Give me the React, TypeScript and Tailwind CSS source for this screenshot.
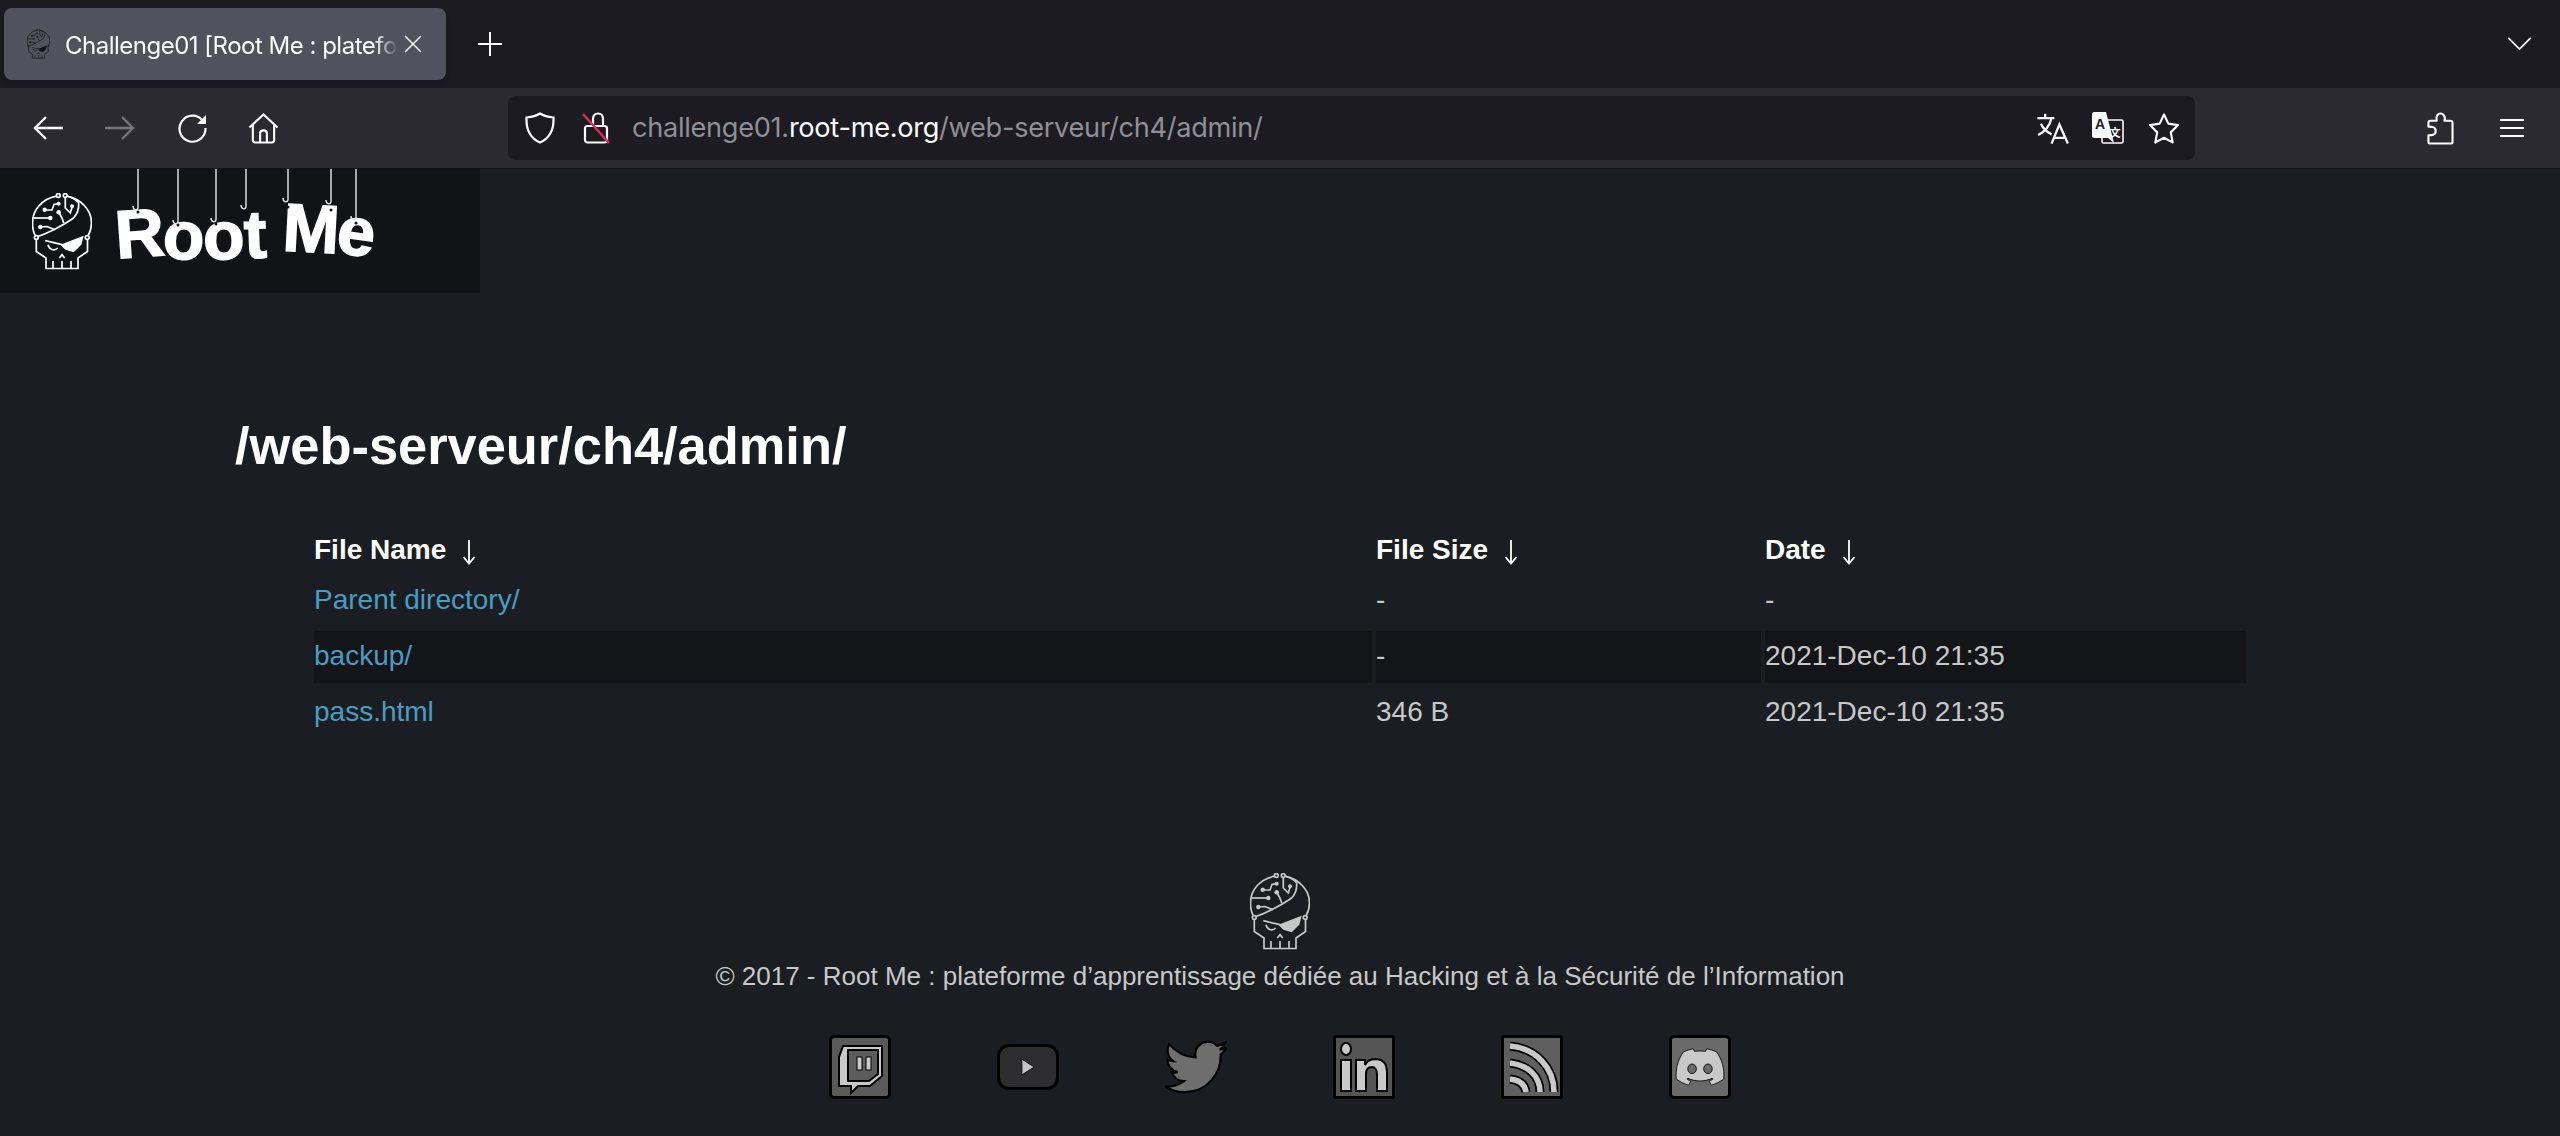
import { FaDiscord, FaTwitter } from "react-icons/fa";

const Skull = ({ className, color }: { className: string; color: string }) => (
  <svg viewBox="0 0 60 77" className={className} fill="none" stroke={color} strokeWidth="1.700">
    <circle cx="26.3" cy="2.5" r="1.9" />
    <circle cx="33.2" cy="2.5" r="1.9" />
    <circle cx="4.3" cy="44.5" r="1.9" />
    <circle cx="55.2" cy="44.5" r="1.9" />
    <path d="M24.5 3.2C10 6 0.5 17 0.5 30c0 5 1.2 10 3 13" />
    <path d="M35 3.2C49 6 59.5 17 59.5 30c0 5-1.5 9.500-3.500 13" />
    <path d="M5.500 43.500C14 41 32 32 41.500 25c4-4 5.500-9 5.200-15 -3-4-8-6-12-7" />
    <path d="M4.300 46.400V58.500L14 65V75.500H46V65L55.500 58.500V46.400" />
    <path d="M21 75V68M30 75V68M39 75V68" />
    <path d="M33.300 4V15l5 5 2-6.500" />
    <path d="M13 17H20L22 11.500 26.700 10.700" />
    <circle cx="12.700" cy="16.700" r="2.200" fill={color} stroke="none" />
    <circle cx="26.700" cy="10.700" r="2" fill={color} stroke="none" />
    <circle cx="26.700" cy="19.300" r="2.300" fill={color} stroke="none" />
    <path d="M26.700 19.300L30 25l1.700 5" />
    <path d="M1.500 25H18.300" />
    <circle cx="18.300" cy="25" r="2.200" fill={color} stroke="none" />
    <path d="M8.300 34L15 33.500 23 36.700" />
    <circle cx="8.300" cy="34" r="2.200" fill={color} stroke="none" />
    <circle cx="40" cy="13.300" r="2" fill={color} stroke="none" />
    <path d="M13.300 47.700L30 51.700" />
    <path fill={color} stroke="none" d="M28.300 51.700L51.700 42.700 49.300 51.700 41.700 59.300 33.300 56.700Z" />
    <path d="M16 51.700c1 4.500 6 7 9.700 3.300" />
    <path d="M27.300 65L30 61.700 32.700 65" />
  </svg>
);

const IconBox = ({ children, bg }: { children: React.ReactNode; bg: string }) => (
  <div className={`w-[62px] h-[64px] rounded-[5px] border-[3px] border-black flex items-center justify-center ${bg}`}>
    {children}
  </div>
);

const TwitchIcon = () => (
  <div className="w-[62px] h-[64px] rounded-[5px] border-[3px] border-black bg-[#5a5a5a] flex items-center justify-center">
    <svg viewBox="0 0 56 58" className="w-[56px] h-[58px]">
      <path d="M11 8H50V38L38 48H26L19 55V48H7V19Z" fill="#c9c9c9" stroke="#000" strokeWidth="2" />
      <path d="M16 12H46V36L37 43H16Z" fill="#5c5c5c" stroke="#000" strokeWidth="2" />
      <rect x="25" y="19" width="5" height="13" fill="#c9c9c9" stroke="#000" strokeWidth="1" />
      <rect x="34" y="19" width="5" height="13" fill="#c9c9c9" stroke="#000" strokeWidth="1" />
    </svg>
  </div>
);

const YoutubeIcon = () => (
  <div className="w-[62px] h-[46px] rounded-[12px] border-[3px] border-black bg-[#2e2e30] flex items-center justify-center">
    <svg viewBox="0 0 16 20" className="w-[14px] h-[20px]">
      <path d="M1 1L15 10L1 19Z" fill="#c4c4c4" stroke="#000" strokeWidth="1" />
    </svg>
  </div>
);

const LinkedinIcon = () => (
  <div className="w-[62px] h-[64px] rounded-[3px] border-[3px] border-black bg-[#555] flex items-center justify-center">
    <svg viewBox="0 0 56 58" className="w-[56px] h-[58px]">
      <g fill="#c9c9c9" stroke="#000" strokeWidth="2">
        <ellipse cx="10" cy="11" rx="5" ry="6" />
        <rect x="5" y="22" width="10" height="31" />
        <path d="M20 22H29V27C32 21 37 21 41 21 48 22 51 27 51 34V53H41V36C41 32 39 29 36 29 32 29 30 32 30 36V53H20Z" />
      </g>
    </svg>
  </div>
);

const RssIcon = () => (
  <div className="w-[62px] h-[64px] rounded-[3px] border-[3px] border-black bg-[#5f5f5f] flex items-center justify-center">
    <svg viewBox="0 0 56 58" className="w-[56px] h-[58px]" fill="none">
      <g stroke="#000" strokeWidth="9">
        <path d="M6 8C32 10 50 30 50 54" />
        <path d="M6 25C24 27 36 38 36 54" />
        <path d="M6 41C15 42 21 46 22 54" />
      </g>
      <g stroke="#c9c9c9" strokeWidth="5.500">
        <path d="M6 8C32 10 50 30 50 54" />
        <path d="M6 25C24 27 36 38 36 54" />
        <path d="M6 41C15 42 21 46 22 54" />
      </g>
    </svg>
  </div>
);

const DiscordIcon = () => (
  <IconBox bg="bg-[#6a6a6a]">
    <FaDiscord className="w-[52px] h-[52px] text-[#c9c9c9] [&_path]:stroke-black [&_path]:[stroke-width:10px]" />
  </IconBox>
);

const ArrowDown = () => (
  <svg viewBox="0 0 14 26" className="w-[14px] h-[26px] ml-[16px] inline-block align-middle" fill="none" stroke="#fff" strokeWidth="1.800">
    <path d="M7 1V24M1.500 18L7 24.500 12.500 18" />
  </svg>
);

// hanging strings of the logo: x, end of the string, hole in the letter
const strings = [
  [138, 39, 43],
  [178, 53, 56],
  [216, 51, 55],
  [246, 38, 43],
  [288, 31, 38],
  [331, 33, 41],
  [356, 49, 54],
];

const letters = [
  { ch: "R", cls: "rotate-[-4deg] translate-y-[-1px]" },
  { ch: "o", cls: "rotate-[2deg] translate-y-[1px]" },
  { ch: "o", cls: "rotate-[-2deg] translate-y-[1px]" },
  { ch: "t", cls: "rotate-[-2deg] translate-y-[0px] ml-[1px]" },
  { ch: "M", cls: "rotate-[3deg] translate-y-[-6px] ml-[18px]" },
  { ch: "e", cls: "rotate-[8deg] translate-y-[-3px]" },
];

const rows = [
  { name: "Parent directory/", size: "-", date: "-", cellBg: "" },
  { name: "backup/", size: "-", date: "2021-Dec-10 21:35", cellBg: "bg-[#131519]" },
  { name: "pass.html", size: "346 B", date: "2021-Dec-10 21:35", cellBg: "" },
];

const App = () => {
  return (
    <div className="w-[2560px] h-[1136px] overflow-hidden flex flex-col bg-[#1a1e23] font-['Liberation_Sans',sans-serif]">
      {/* tab strip */}
      <div className="h-[88px] shrink-0 bg-[#1c1b22] flex items-center pl-[4px] pr-[28px]">
        <div className="w-[442px] h-[72px] rounded-[8px] bg-[#52525e] flex items-center pl-[23px] pr-[24px] shadow-md">
          <Skull className="w-[23px] h-[30px] shrink-0" color="#111" />
          <span className="ml-[15px] mt-[3px] w-[333px] overflow-hidden whitespace-nowrap text-[24px] text-[#fbfbfe] font-['Inter',sans-serif] tracking-[-0.5px] [mask-image:linear-gradient(to_right,black_93%,transparent)]">
            Challenge01 [Root Me : plateforme
          </span>
          <svg viewBox="0 0 18 18" className="w-[18px] h-[18px] ml-[6px] -mt-[1px] shrink-0" fill="none" stroke="#fbfbfe" strokeWidth="1.500">
            <path d="M1 1L17 17M17 1L1 17" />
          </svg>
        </div>
        <svg viewBox="0 0 26 26" className="w-[26px] h-[26px] ml-[31px]" fill="none" stroke="#fbfbfe" strokeWidth="2">
          <path d="M13 1V25M1 13H25" />
        </svg>
        <svg viewBox="0 0 26 15" className="w-[25px] h-[14px] ml-auto -mt-[1px]" fill="none" stroke="#fbfbfe" strokeWidth="1.800">
          <path d="M1 1L13 13 25 1" />
        </svg>
      </div>

      {/* nav bar */}
      <div className="h-[81px] shrink-0 bg-[#2b2a33] border-b border-[#111] flex items-center pl-[33px] pr-[36px]">
        <svg viewBox="0 0 30 24" className="w-[30px] h-[24px]" fill="none" stroke="#fbfbfe" strokeWidth="2.400">
          <path d="M30 12H2M13 1L2 12 13 23" />
        </svg>
        <svg viewBox="0 0 30 24" className="w-[30px] h-[24px] ml-[42px]" fill="none" stroke="#77767c" strokeWidth="2.400">
          <path d="M0 12H28M17 1L28 12 17 23" />
        </svg>
        <svg viewBox="0 0 30 30" className="w-[30px] h-[30px] ml-[42px]" fill="none" stroke="#fbfbfe" strokeWidth="2.200">
          <path d="M26 8A13 13 0 1 0 28.500 15" />
          <path d="M29 2V11H20Z" fill="#fbfbfe" stroke="none" />
        </svg>
        <svg viewBox="0 0 32 32" className="w-[31px] h-[31px] ml-[41px]" fill="none" stroke="#fbfbfe" strokeWidth="2.200">
          <path d="M1.500 15L16 1.500 30.500 15M5 12V28C5 29.500 6 30.500 7.500 30.500H24.500C26 30.500 27 29.500 27 28V12" />
          <path d="M12.500 30V21C12.500 19 14 18 16 18S19.500 19 19.500 21V30" />
        </svg>
        <div className="w-[1688px] h-[64px] ml-[229px] rounded-[8px] bg-[#1c1b22] flex items-center pl-[17px] pr-[15px]">
          <svg viewBox="0 0 30 32" className="w-[30px] h-[32px] shrink-0" fill="none" stroke="#fbfbfe" strokeWidth="2.200">
            <path d="M15 1.500C19 4 24 5 28.500 5.500C29 17 25 26 15 30.500C5 26 1 17 1.500 5.500C6 5 11 4 15 1.500Z" />
          </svg>
          <svg viewBox="0 0 28 32" className="w-[28px] h-[32px] ml-[27px] shrink-0" fill="none" stroke="#fbfbfe" strokeWidth="2.200">
            <path d="M11 13V7C11 3 13.500 1.500 16 1.500S21 3 21 7V14" />
            <rect x="3" y="14" width="22" height="16.500" rx="2.500" />
            <path d="M1 2L27 31" stroke="#e22850" strokeWidth="2.600" />
          </svg>
          <div className="ml-[22px] mt-[1px] whitespace-nowrap text-[27.200px] tracking-[-0.3px] font-['Inter',sans-serif] text-[#8f8f95]">
            challenge01.<span className="text-[#fbfbfe]">root-me.org</span>/web-serveur/ch4/admin/
          </div>
          <svg viewBox="0 0 24 24" className="w-[34px] h-[34px] ml-auto shrink-0" fill="none" stroke="#fbfbfe" strokeWidth="1.600">
            <path d="M1 5H13M6.500 2V5M11 5C10 10 6 15 1.500 17M3.500 9C5 12.500 8 15 11 16.500" />
            <path d="M11 23L16.500 9.500 22.500 23M13 19H20.500" />
          </svg>
          <svg viewBox="0 0 32 32" className="w-[32px] h-[32px] ml-[22px] shrink-0">
            <rect x="10" y="8" width="21" height="23" rx="1.500" fill="none" stroke="#fbfbfe" strokeWidth="1.600" />
            <path d="M2 0H14L22 31 16 26H2C1 26 0 25 0 24V2C0 1 1 0 2 0Z" fill="#fbfbfe" />
            <text x="8" y="17" textAnchor="middle" fontSize="14" fontWeight="700" fill="#1c1b22" fontFamily="Liberation Sans">A</text>
            <text x="23" y="25" textAnchor="middle" fontSize="11" fontWeight="700" fill="#fbfbfe" fontFamily="Noto Sans CJK SC">文</text>
          </svg>
          <svg viewBox="0 0 32 32" className="w-[32px] h-[31px] ml-[24px] shrink-0" fill="none" stroke="#fbfbfe" strokeWidth="2.200">
            <path d="M16 1.500L20.500 11 30.500 12.500 23 20 25 30.500 16 25.500 7 30.500 9 20 1.500 12.500 11.500 11Z" strokeLinejoin="round" />
          </svg>
        </div>
        <svg viewBox="0 0 28 34" className="w-[27px] h-[33px] ml-[232px]" fill="none" stroke="#fbfbfe" strokeWidth="2.200">
          <path d="M3 32.500C2 32.500 1.500 32 1.500 31V24C5 24 9 24 9 19.500S5 15 1.500 15V11C1.500 9.500 2.500 9 3.500 9H10C9 3 12 1.500 14 1.500S20 4 18 9H24C25.500 9 26.500 10 26.500 11V31C26.500 32 26 32.500 25 32.500Z" strokeLinejoin="round" />
        </svg>
        <div className="w-[24px] ml-[46px] flex flex-col gap-[6px]">
          <div className="h-[2px] bg-[#fbfbfe]" />
          <div className="h-[2px] bg-[#fbfbfe]" />
          <div className="h-[2px] bg-[#fbfbfe]" />
        </div>
      </div>

      {/* site logo */}
      <div className="w-[480px] h-[124px] shrink-0 bg-[#111317] relative flex items-center pl-[32px]">
        <Skull className="w-[60px] h-[77px] shrink-0" color="#fff" />
        <div className="ml-[23px] mt-[6px] flex items-baseline text-[68px] leading-none font-bold text-white [-webkit-text-stroke:1.500px_white] tracking-[-1.500px]">
          {letters.map((l, i) => (
            <span key={i} className={`inline-block ${l.cls}`}>{l.ch}</span>
          ))}
        </div>
        <svg viewBox="0 0 480 124" className="absolute inset-0 w-[480px] h-[124px]" fill="none">
          {strings.map(([x, end, hole]) => (
            <g key={x}>
              <path d={`M${x} 0V${end}c-1 3-5 2-5-2`} stroke="#dcdcdc" strokeWidth="1.500" />
              <circle cx={x} cy={hole} r="1.500" fill="#111317" />
            </g>
          ))}
        </svg>
      </div>

      {/* listing */}
      <h1 className="mt-[123px] ml-[235px] text-[52.400px] leading-[60px] font-bold text-white">/web-serveur/ch4/admin/</h1>

      <table className="mt-[43px] ml-[310px] w-[1940px] table-fixed border-separate border-spacing-[4px] text-[28px] text-[#c8c8c8]">
        <colgroup>
          <col className="w-[1058px]" />
          <col className="w-[385px]" />
          <col className="w-[481px]" />
        </colgroup>
        <thead>
          <tr className="h-[48px] text-left text-white font-bold">
            <th className="p-0 pt-[6px] font-bold">File Name<ArrowDown /></th>
            <th className="p-0 pt-[6px] font-bold">File Size<ArrowDown /></th>
            <th className="p-0 pt-[6px] font-bold">Date<ArrowDown /></th>
          </tr>
        </thead>
        <tbody>
          {rows.map((row) => (
            <tr key={row.name} className="h-[52px]">
              <td className={`p-0 pb-[2px] ${row.cellBg}`}><a className="text-[#4a9cc2]">{row.name}</a></td>
              <td className={`p-0 pb-[2px] ${row.cellBg}`}>{row.size}</td>
              <td className={`p-0 pb-[2px] ${row.cellBg}`}>{row.date}</td>
            </tr>
          ))}
        </tbody>
      </table>

      {/* footer */}
      <div className="mt-[130px] flex flex-col items-center">
        <Skull className="w-[60px] h-[77px]" color="#c8c8c8" />
        <p className="mt-[8px] text-[26px] leading-[36px] text-[#c8c8c8]">
          © 2017 - Root Me : plateforme d’apprentissage dédiée au Hacking et à la Sécurité de l’Information
        </p>
        <div className="mt-[41px] h-[64px] flex items-center gap-[106px]">
          <TwitchIcon />
          <YoutubeIcon />
          <FaTwitter className="w-[62px] h-[62px] text-[#6e6e6e] [&_path]:stroke-black [&_path]:[stroke-width:18px]" />
          <LinkedinIcon />
          <RssIcon />
          <DiscordIcon />
        </div>
      </div>
    </div>
  );
};

export default App;
